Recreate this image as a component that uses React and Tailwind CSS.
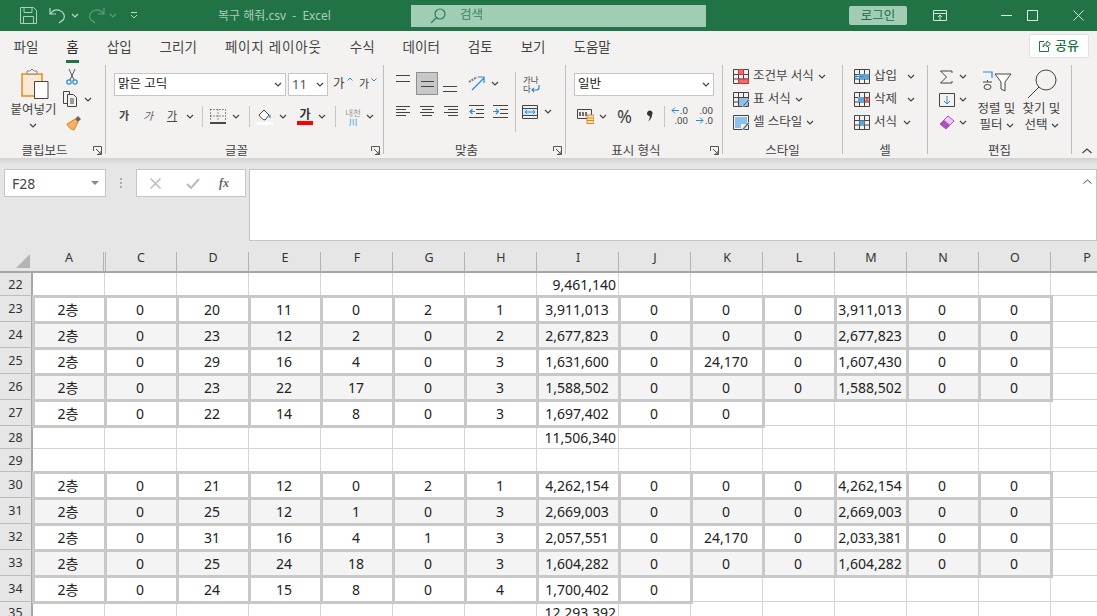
import React from "react";
import clsx from "clsx";

const BLUE = "#2a8ad4";
const DARK = "#444444";

const Chev = ({ className = "", color = "#444" }) => (
  <svg width="8" height="5" viewBox="0 0 8 5" className={className}>
    <path d="M1 1l3 3 3-3" fill="none" stroke={color} strokeWidth="1.2" />
  </svg>
);

const Sep = ({ className = "" }) => <div className={clsx("w-px h-[21px] bg-[#c6c6c6]", className)} />;

const Launcher = () => (
  <svg width="9" height="9" viewBox="0 0 9 9" className="absolute right-[3px] bottom-[-1px]">
    <path d="M.5 5V.5H8.500V8.500H4M3 3l5 5M5 8h3V5" fill="none" stroke="#555" strokeWidth="1" />
  </svg>
);

const Group = ({ className, label, launcher, children }) => (
  <div className={clsx("relative shrink-0 h-[89px] border-r border-[#bdbdbd]", className)}>
    <div className="h-[79px]">{children}</div>
    <div className={clsx("h-[10px] leading-[14px] text-center text-[12.500px] text-[#444]", launcher && "pr-[16px]")}>{label}</div>
    {launcher && <Launcher />}
  </div>
);

const Lines = ({ rows, className = "" }) => (
  <svg width="15" height="15" viewBox="0 0 15 15" className={className}>
    {rows.map(([x1, x2, y]) => (
      <path key={y + "-" + x1} d={`M${x1} ${y}.5H${x2}`} stroke={DARK} strokeWidth="1" />
    ))}
  </svg>
);

const IndentIcon = ({ flip }) => (
  <svg width="15" height="15" viewBox="0 0 15 15">
    <path d="M0 1.500H15M7 5.500H15M7 9.500H15M0 13.500H15" stroke={DARK} />
    {flip ? (
      <path d="M0 7.500H5M3 5l2.500 2.500L3 10" fill="none" stroke={BLUE} strokeWidth="1.2" />
    ) : (
      <path d="M6 7.500H1M3.500 5L1 7.500L3.500 10" fill="none" stroke={BLUE} strokeWidth="1.2" />
    )}
  </svg>
);

const GridIcon = ({ children }) => (
  <svg width="17" height="16" viewBox="0 0 17 16" className="shrink-0">
    <path d="M.5.500h15v14H.500zM.5 5.500h15M.5 10h15M5.500.500v14M10.500.500v14" fill="none" stroke={DARK} />
    {children}
  </svg>
);

const Brush = () => (
  <path d="M9 14l6-7 1.500 1.500-6 6.500z" fill="#5a6b8c" stroke="#fff" strokeWidth=".5" />
);

const TitleBar = () => (
  <div className="h-[31px] bg-[#217346] flex items-center relative shrink-0">
    <svg width="17" height="17" viewBox="0 0 17 17" className="ml-[20px]">
      <path d="M.5.500h13l3 3v13H.500zM4 .5v5h8v-5M3.500 16.500V9.500h10v7" fill="none" stroke="#a8d0ba" />
    </svg>
    <svg width="18" height="17" viewBox="0 0 18 17" className="ml-[12px]">
      <path d="M1 1v6h6M1.500 7C4 3 8 2.500 11 3.500c4 1.500 5.500 6 3.500 9L10 16" fill="none" stroke="#b9dac8" strokeWidth="1.2" />
    </svg>
    <Chev className="ml-[4px]" color="#b9dac8" />
    <svg width="18" height="17" viewBox="0 0 18 17" className="ml-[8px]">
      <path d="M17 1v6h-6M16.500 7C14 3 10 2.500 7 3.500c-4 1.500-5.500 6-3.500 9L8 16" fill="none" stroke="#5f9d7d" strokeWidth="1.2" />
    </svg>
    <Chev className="ml-[4px]" color="#5f9d7d" />
    <svg width="8" height="7" viewBox="0 0 8 7" className="ml-[13px]">
      <path d="M1 .5h6M1 3l3 3 3-3" fill="none" stroke="#b9dac8" />
    </svg>
    <div className="ml-[80px] w-[125px] text-[12px] text-[#a6cfb9] whitespace-nowrap">복구 해줘.csv&nbsp;&nbsp;-&nbsp;&nbsp;Excel</div>
    <div className="ml-[68px] w-[295px] h-[22px] bg-[#a0cdb3] flex items-center">
      <svg width="16" height="16" viewBox="0 0 16 16" className="ml-[19px]">
        <circle cx="10" cy="6" r="5" fill="none" stroke="#2f7d55" strokeWidth="1.2" />
        <path d="M6.500 9.500L1 15" stroke="#2f7d55" strokeWidth="1.2" />
      </svg>
      <span className="ml-[14px] text-[12.500px] text-[#3a8560]">검색</span>
    </div>
    <div className="ml-[143px] w-[58px] h-[19px] rounded-[2px] bg-[#a0cdb3] text-[12.500px] leading-[19px] text-center text-[#1f6b45]">로그인</div>
    <svg width="14" height="12" viewBox="0 0 14 12" className="ml-[26px]">
      <path d="M.5.500h13v10H.500zM.5 3.500h13M7 10V5M5 7l2-2 2 2" fill="none" stroke="#cfe5d9" />
    </svg>
    <div className="ml-[54px] w-[11px] h-px bg-[#d7e9df]" />
    <div className="ml-[15px] w-[11px] h-[11px] border border-[#d7e9df]" />
    <svg width="11" height="11" viewBox="0 0 11 11" className="ml-[35px]">
      <path d="M.5.500l10 10M10.500.500l-10 10" stroke="#d7e9df" />
    </svg>
  </div>
);

const tabs = ["파일", "홈", "삽입", "그리기", "페이지 레이아웃", "수식", "데이터", "검토", "보기", "도움말"];

const TabBar = () => (
  <div className="h-[32px] shrink-0 bg-[#f3f2f1] flex items-center pl-[13.500px] gap-[28px] relative text-[13.500px] text-[#444]">
    {tabs.map((t) => (
      <div key={t} className={clsx("relative whitespace-nowrap", t === "페이지 레이아웃" && "tracking-[0.8px]", t === "홈" && "text-[#222]")}>
        {t}
        {t === "홈" && <div className="absolute left-0 right-0 -bottom-[6px] h-[3px] bg-[#217346]" />}
      </div>
    ))}
    <div className="absolute right-[8px] top-[3px] w-[60px] h-[24px] bg-white border border-[#e1e1e1] rounded-[2px] flex items-center justify-center gap-[4px] text-[13px] font-medium text-[#217346]">
      <svg width="12" height="12" viewBox="0 0 12 12">
        <path d="M5 1.500H.5v10h9V7M4 7c0-3 2-4 4-4V1l3.500 3L8 7V5C6 5 5 5.500 4 7z" fill="none" stroke="#217346" />
      </svg>
      공유
    </div>
  </div>
);

const Clipboard = () => (
  <Group className="w-[106px]" label="클립보드" launcher>
    <div className="flex">
      <div className="w-[66px] flex flex-col items-center pt-[3px]">
        <svg width="28" height="31" viewBox="0 0 28 31" className="ml-[4px]">
          <path d="M1 6h20v22H1z" fill="#fbe9d6" stroke="#e88a1e" strokeWidth="1.5" />
          <path d="M6 6V3h3l2-2 2 2h3v3z" fill="#f3f2f1" stroke="#888" />
          <path d="M13.500 13.500h13.500v17H13.500z" fill="#fff" stroke="#444" />
        </svg>
        <div className="mt-[2px] ml-[1px] text-[12.500px] leading-[18px] text-[#444] whitespace-nowrap">붙여넣기</div>
        <Chev className="mt-[4px]" />
      </div>
      <div className="flex flex-col items-start pt-[2px]">
        <svg width="12" height="16" viewBox="0 0 12 16" className="mt-[2px]">
          <path d="M3 0l5 11M9 0L4 11" stroke="#555" />
          <circle cx="3" cy="13" r="2.200" fill="none" stroke={BLUE} strokeWidth="1.200" />
          <circle cx="9" cy="13" r="2.200" fill="none" stroke={BLUE} strokeWidth="1.200" />
        </svg>
        <div className="flex items-center mt-[6px] -ml-[3px]">
          <svg width="17" height="16" viewBox="0 0 17 16">
            <path d="M4 12.500H.5v-12h6v3M4.500 3.500h6l3 3v9h-9zM7 8h4M7 10h4M7 12h4" fill="none" stroke="#444" />
          </svg>
          <Chev className="ml-[4px]" />
        </div>
        <svg width="16" height="16" viewBox="0 0 16 16" className="mt-[8px]">
          <path d="M9 4l3-3 3 3-3 3z" fill="#666" />
          <path d="M9 4l3 3-4 8c-2 0-6-3-7-6z" fill="#f4b06a" stroke="#e08010" />
        </svg>
      </div>
    </div>
  </Group>
);

const Font = () => (
  <Group className="w-[278px]" label="글꼴" launcher>
    <div className="flex items-center pt-[8px] pl-[8px]">
      <div className="w-[172px] h-[23px] bg-white border border-[#c6c6c6] flex items-center justify-between pl-[3px] pr-[3px] text-[12.500px] text-[#222]">
        맑은 고딕 <Chev />
      </div>
      <div className="ml-[2px] w-[40px] h-[23px] bg-white border border-[#c6c6c6] flex items-center justify-between pl-[3px] pr-[3px] text-[13px] text-[#555]">
        11 <Chev />
      </div>
      <div className="ml-[5px] w-[20px] relative text-[12.500px] text-[#444]">
        가
        <svg width="6" height="4" viewBox="0 0 6 4" className="absolute right-[0px] top-[2px]">
          <path d="M.5 3.500L3 1l2.500 2.500" fill="none" stroke={BLUE} />
        </svg>
      </div>
      <div className="ml-[6px] w-[20px] relative text-[11px] text-[#444]">
        가
        <svg width="6" height="4" viewBox="0 0 6 4" className="absolute right-[2px] top-[2px]">
          <path d="M.5.500L3 3l2.500-2.500" fill="none" stroke={BLUE} />
        </svg>
      </div>
    </div>
    <div className="flex items-center h-[21px] mt-[10px] pl-[13px] text-[11px] text-[#444]">
      <span className="font-bold w-[12px]">가</span>
      <span className="italic ml-[12px] w-[12px] text-[#666]">가</span>
      <span className="underline ml-[12px] w-[12px]">가</span>
      <Chev className="ml-[7px]" />
      <Sep className="ml-[8px]" />
      <svg width="16" height="15" viewBox="0 0 16 15" className="ml-[7px]">
        <path d="M.5.500h15M.5 7h15M.5.500v12M8 .500v12M15.500.500v12" fill="none" stroke="#333" strokeDasharray="1 2" />
        <path d="M0 14h16" stroke="#111" strokeWidth="1.500" />
      </svg>
      <Chev className="ml-[6px]" />
      <Sep className="ml-[9px]" />
      <svg width="16" height="16" viewBox="0 0 16 16" className="ml-[7px]">
        <path d="M2 6l5-5 5 5-4 5c-2 0-5-3-6-5z" fill="#fff" stroke="#444" />
        <path d="M13 5c1 2 1 4 0 4s-1-2 0-4z" fill={BLUE} />
        <path d="M0 13h16v3H0z" fill="#fff" />
      </svg>
      <Chev className="ml-[6px]" />
      <div className="ml-[10px] w-[16px] flex flex-col items-center">
        <span className="font-bold text-[12px] leading-[13px] text-[#333]">가</span>
        <span className="w-[16px] h-[4px] bg-[#ff0000]" />
      </div>
      <Chev className="ml-[5px]" />
      <Sep className="ml-[9px]" />
      <div className="ml-[7px] w-[20px] flex flex-col items-center text-[8.500px] leading-[9px] text-[#999]">
        내천
        <span className="text-[#2a8ad4]">川</span>
      </div>
      <Chev className="ml-[3px]" />
    </div>
  </Group>
);

const Align = () => (
  <Group className="w-[182px]" label="맞춤" launcher>
    <div className="flex items-start pt-[7px] pl-[12px]">
      <Lines rows={[[0, 14, 2], [0, 14, 8]]} className="mt-[1px]" />
      <div className="ml-[5px] w-[22px] h-[23px] bg-[#c8c8c8] border border-[#8e8e8e] flex items-center justify-center">
        <Lines rows={[[1, 14, 5], [1, 14, 10]]} />
      </div>
      <Lines rows={[[0, 14, 8], [0, 14, 13]]} className="ml-[5px] mt-[6px]" />
      <svg width="18" height="18" viewBox="0 0 18 18" className="ml-[10px] mt-[2px]">
        <path d="M4 16L16 4M10 3h6v6" fill="none" stroke={BLUE} strokeWidth="1.200" />
        <path d="M1 8l8-5" stroke="#777" strokeWidth="2" strokeDasharray="2 1" />
      </svg>
      <Chev className="ml-[5px] mt-[9px]" />
      <Sep className="ml-[16px] h-[60px]" />
      <div className="ml-[7px] w-[20px] mt-[3px] text-[8.500px] leading-[9px] text-[#444]">
        가나
        <div className="flex items-center">
          다
          <svg width="9" height="8" viewBox="0 0 9 8">
            <path d="M8 0v3c0 2-2 2-3 2H1M3 3L1 5l2 2" fill="none" stroke={BLUE} strokeWidth="1.200" />
          </svg>
        </div>
      </div>
    </div>
    <div className="flex items-center -mt-[28px] pl-[12px]">
      <Lines rows={[[0, 14, 2], [0, 10, 5], [0, 14, 8], [0, 10, 11]]} />
      <Lines rows={[[0, 14, 2], [2, 12, 5], [0, 14, 8], [2, 12, 11]]} className="ml-[9px]" />
      <Lines rows={[[0, 14, 2], [4, 14, 5], [0, 14, 8], [4, 14, 11]]} className="ml-[9px]" />
      <div className="ml-[10px]"><IndentIcon /></div>
      <div className="ml-[9px]"><IndentIcon flip /></div>
      <svg width="16" height="14" viewBox="0 0 16 14" className="ml-[14px]">
        <path d="M.5.500h15v13H.500zM.5 3.500h15M.5 10.500h15" fill="none" stroke="#444" />
        <path d="M1 4h14v6H1z" fill="#d7e9f7" />
        <path d="M3 7h10M5 5L3 7l2 2M11 5l2 2-2 2" fill="none" stroke={BLUE} />
      </svg>
      <Chev className="ml-[6px]" />
    </div>
  </Group>
);

const NumberFmt = () => (
  <Group className="w-[157px]" label="표시 형식" launcher>
    <div className="pt-[8px] pl-[8px]">
      <div className="w-[140px] h-[23px] bg-white border border-[#c6c6c6] flex items-center justify-between pl-[3px] pr-[3px] text-[12.500px] text-[#222]">
        일반 <Chev />
      </div>
    </div>
    <div className="flex items-center h-[24px] mt-[8px] pl-[11px]">
      <svg width="17" height="16" viewBox="0 0 17 16">
        <path d="M.5 1.500h14v9H.500z" fill="none" stroke="#444" />
        <path d="M3 4v4M6 4v4M9 4v4" stroke="#444" strokeWidth="1.500" />
        <path d="M10 7h7v8.500h-7z" fill="#fbe3c8" stroke="#e48312" />
        <path d="M10 10h7M10 12.500h7" stroke="#e48312" />
      </svg>
      <Chev className="ml-[5px]" />
      <span className="ml-[10px] w-[17px] text-[18px] leading-[20px] text-[#444] font-['Noto_Sans']">%</span>
      <svg width="7" height="12" viewBox="0 0 7 12" className="ml-[12px] -mt-[1px]">
        <path d="M1 3a2.800 2.800 0 1 1 5 2c0 2-1.500 5-4 6.500C4 9 4 7 3.500 6 2 6 1 5 1 3z" fill="#333" />
      </svg>
      <Sep className="ml-[11px]" />
      <div className="ml-[6px] w-[17px] relative text-[9.500px] leading-[10px] text-[#444] text-right font-['Noto_Sans']">
        <svg width="8" height="7" viewBox="0 0 8 7" className="absolute left-0 top-[1px]"><path d="M8 3.500H1M4 .500l-3 3 3 3" fill="none" stroke={BLUE} /></svg>
        .0
        <br />
        .00
      </div>
      <div className="ml-[8px] w-[17px] relative text-[9.500px] leading-[10px] text-[#444] text-right font-['Noto_Sans']">
        .00
        <br />
        .0
        <svg width="8" height="7" viewBox="0 0 8 7" className="absolute left-0 top-[11px]"><path d="M0 3.500H7M4 .500l3 3-3 3" fill="none" stroke={BLUE} /></svg>
      </div>
    </div>
  </Group>
);

const SideRow = ({ icon, text, className = "", chevGap = "ml-[4px]" }) => (
  <div className={clsx("flex items-center h-[23px] text-[12.500px] text-[#444] whitespace-nowrap", className)}>
    {icon}
    <span className="ml-[3px]">{text}</span>
    <Chev className={chevGap} />
  </div>
);

const Styles = () => (
  <Group className="w-[120px]" label="스타일">
    <div className="pl-[10px] flex flex-col">
      <SideRow
        icon={
          <GridIcon>
            <path d="M5.500.500h5v5h-5zM5.500 10h10v4.500h-10z" fill="#f06a6a" stroke="#c33" />
          </GridIcon>
        }
        text="조건부 서식"
      />
      <SideRow
        icon={
          <GridIcon>
            <path d="M6 6h9v8H6z" fill="#8cc0ea" />
            <Brush />
          </GridIcon>
        }
        text="표 서식"
      />
      <SideRow
        icon={
          <svg width="17" height="16" viewBox="0 0 17 16" className="shrink-0">
            <path d="M.5.500h15v14H.500z" fill="none" stroke={DARK} />
            <path d="M2 2h12v7H8v4H2z" fill="#8cc0ea" />
            <Brush />
          </svg>
        }
        text="셀 스타일"
      />
    </div>
  </Group>
);

const Cells = () => (
  <Group className="w-[85px]" label="셀">
    <div className="pl-[11px] flex flex-col">
      <SideRow
        chevGap="ml-[10px]"
        icon={
          <GridIcon>
            <path d="M5 5h10v5H5z" fill="#5aa5e0" />
            <path d="M9 7.500H1M3.500 5L1 7.500 3.500 10" fill="none" stroke={BLUE} />
          </GridIcon>
        }
        text="삽입"
      />
      <SideRow
        chevGap="ml-[10px]"
        icon={
          <GridIcon>
            <path d="M4 5h6v5H4z" fill="#5aa5e0" />
            <path d="M11 5l4 5M15 5l-4 5" stroke="#e04a4a" strokeWidth="1.300" />
          </GridIcon>
        }
        text="삭제"
      />
      <SideRow
        chevGap="ml-[6px]"
        icon={
          <GridIcon>
            <path d="M5.500 5.500h5v5h-5z" fill="#5aa5e0" />
            <path d="M3 0h10" stroke={BLUE} />
          </GridIcon>
        }
        text="서식"
      />
    </div>
  </Group>
);

const Editing = () => (
  <Group className="w-[144px]" label="편집">
    <div className="flex pl-[11px]">
      <div className="w-[37px] flex flex-col">
        <div className="flex items-center h-[23px]">
          <svg width="14" height="14" viewBox="0 0 14 14">
            <path d="M13 3V1H1.500L7.500 7l-6 6H13v-2" fill="none" stroke="#444" />
          </svg>
          <Chev className="ml-[6px]" />
        </div>
        <div className="flex items-center h-[23px]">
          <svg width="16" height="14" viewBox="0 0 16 14">
            <path d="M.5.500h15v13H.500z" fill="none" stroke="#444" />
            <path d="M8 3v8M5 8l3 3 3-3" fill="none" stroke={BLUE} />
          </svg>
          <Chev className="ml-[4px]" />
        </div>
        <div className="flex items-center h-[23px]">
          <svg width="16" height="15" viewBox="0 0 16 15">
            <path d="M1 9l8-8 6 5-8 8z" fill="#e6d0ee" stroke="#b04fc0" />
            <path d="M1 9l4-4 6 5-4 4z" fill="#b04fc0" />
          </svg>
          <Chev className="ml-[4px]" />
        </div>
      </div>
      <div className="w-[45px] -ml-[2px] flex flex-col items-center pt-[6px] text-[12.500px] leading-[16px] text-[#444] whitespace-nowrap">
        <svg width="30" height="22" viewBox="0 0 30 22" className="mb-[8px]">
          <path d="M1 1h9v6" fill="none" stroke={BLUE} strokeWidth="1.200" />
          <path d="M1 11h9M5.500 9v2M2 16a3.500 2.500 0 1 0 7 0a3.500 2.500 0 1 0-7 0" fill="none" stroke="#444" />
          <path d="M13 3h16l-6 8v9l-4-2v-7z" fill="#fff" stroke="#444" />
        </svg>
        <span>정렬 및</span>
        <span className="flex items-center">필터<Chev className="ml-[3px]" /></span>
      </div>
      <div className="w-[45px] flex flex-col items-center pt-[4px] text-[12.500px] leading-[16px] text-[#444] whitespace-nowrap">
        <svg width="30" height="30" viewBox="0 0 30 30" className="mb-[2px]">
          <circle cx="19" cy="11" r="10" fill="none" stroke="#444" />
          <path d="M12 18L1 29" stroke="#444" />
        </svg>
        <span>찾기 및</span>
        <span className="flex items-center">선택<Chev className="ml-[3px]" /></span>
      </div>
    </div>
  </Group>
);

const Ribbon = () => (
  <div className="h-[95px] bg-[#f3f2f1] relative shrink-0">
    <div className="flex pt-[2px]">
      <Clipboard />
      <Font />
      <Align />
      <NumberFmt />
      <Styles />
      <Cells />
      <Editing />
    </div>
    <svg width="10" height="6" viewBox="0 0 10 6" className="absolute left-[1082px] top-[85px]">
      <path d="M.5 5L5 1l4.500 4" fill="none" stroke="#444" strokeWidth="1.200" />
    </svg>
  </div>
);

const FormulaBar = () => (
  <div className="h-[90px] bg-[#e6e6e6] relative shrink-0">
    <div className="h-[7px] bg-gradient-to-b from-[#d2d2d2] to-[#e6e6e6]" />
    <div className="flex items-start pl-[4px] pt-[4px]">
      <div className="w-[102px] h-[28px] bg-white border border-[#c6c6c6] flex items-center justify-between pl-[7px] pr-[4px] text-[14px] text-[#444] font-['Noto_Sans']">
        F28
        <div className="w-0 h-0 border-l-[4px] border-r-[4px] border-t-[4px] border-l-transparent border-r-transparent border-t-[#888] mr-[2px]" />
      </div>
      <div className="w-[30px] h-[28px] flex flex-col items-center justify-center gap-[2px]">
        <span className="w-[2px] h-[2px] bg-[#aaa]" />
        <span className="w-[2px] h-[2px] bg-[#aaa]" />
        <span className="w-[2px] h-[2px] bg-[#aaa]" />
      </div>
      <div className="w-[110px] h-[28px] bg-white border border-[#c6c6c6] flex items-center pl-[13px]">
        <svg width="11" height="11" viewBox="0 0 11 11">
          <path d="M.5.500l10 10M10.500.500l-10 10" stroke="#bbb" strokeWidth="1.500" />
        </svg>
        <svg width="14" height="11" viewBox="0 0 14 11" className="ml-[25px]">
          <path d="M1 6l4 4 8-9" fill="none" stroke="#bbb" strokeWidth="2" />
        </svg>
        <span className="ml-[19px] text-[12px] italic font-bold text-[#666] font-['Liberation_Serif']">fx</span>
      </div>
      <div className="ml-[3px] flex-1 h-[72px] bg-white border border-[#c6c6c6] relative">
        <svg width="9" height="5" viewBox="0 0 9 5" className="absolute right-[4px] top-[9px]">
          <path d="M.5 4.500L4.500 1l4 3.500" fill="none" stroke="#444" />
        </svg>
      </div>
    </div>
  </div>
);

const COLS = ["A", "C", "D", "E", "F", "G", "H", "I", "J", "K", "L", "M", "N", "O", "P"];
const GRID = "grid grid-cols-[33px_72px_72px_72px_72px_72px_72px_72px_82px_72px_72px_72px_72px_72px_72px_72px]";

const Header = () => (
  <div className={clsx(GRID, "h-[25px] shrink-0 bg-[#e6e6e6] border-b-2 border-[#a6a6a6] text-[12.500px] text-[#333] font-['Noto_Sans']")}>
    <div className="relative">
      <div className="absolute right-[3px] bottom-[3px] w-0 h-0 border-b-[14px] border-l-[14px] border-b-[#b4b4b4] border-l-transparent" />
    </div>
    {COLS.map((c) => (
      <div key={c} className="relative flex items-center justify-center pb-[2px]">
        {c}
        {/* column B is hidden, so A gets the double line */}
        <div className={clsx("absolute top-[4px] bottom-0 w-px bg-[#b4b4b4]", c === "A" ? "right-[1px]" : "right-0")} />
        {c === "A" && <div className="absolute -right-px top-[4px] bottom-0 w-px bg-[#b4b4b4]" />}
      </div>
    ))}
  </div>
);

const row = (a, c, d, e, f, g, h, i, k, m) => ({ a, c, d, e, f, g, h, i, k, m });

const ROWS = [
  { n: 22, h: "h-[23px]", total: "9,461,140" },
  { n: 23, h: "h-[26px]", data: row("2층", 0, 20, 11, 0, 2, 1, "3,911,013", 0, "3,911,013") },
  { n: 24, h: "h-[26px]", shade: true, data: row("2층", 0, 23, 12, 2, 0, 2, "2,677,823", 0, "2,677,823") },
  { n: 25, h: "h-[26px]", data: row("2층", 0, 29, 16, 4, 0, 3, "1,631,600", "24,170", "1,607,430") },
  { n: 26, h: "h-[26px]", shade: true, data: row("2층", 0, 23, 22, 17, 0, 3, "1,588,502", 0, "1,588,502") },
  { n: 27, h: "h-[26px]", data: row("2층", 0, 22, 14, 8, 0, 3, "1,697,402", 0), upto: 10 },
  { n: 28, h: "h-[23px]", total: "11,506,340" },
  { n: 29, h: "h-[23px]" },
  { n: 30, h: "h-[26px]", data: row("2층", 0, 21, 12, 0, 2, 1, "4,262,154", 0, "4,262,154") },
  { n: 31, h: "h-[26px]", shade: true, data: row("2층", 0, 25, 12, 1, 0, 3, "2,669,003", 0, "2,669,003") },
  { n: 32, h: "h-[26px]", data: row("2층", 0, 31, 16, 4, 1, 3, "2,057,551", "24,170", "2,033,381") },
  { n: 33, h: "h-[26px]", shade: true, data: row("2층", 0, 25, 24, 18, 0, 3, "1,604,282", 0, "1,604,282") },
  { n: 34, h: "h-[26px]", data: row("2층", 0, 24, 15, 8, 0, 4, "1,700,402"), upto: 9 },
  { n: 35, h: "h-[18px]", total: "12,293,392" },
];

const Thin = ({ children }) => (
  <div className="border-r border-b border-[#d4d4d4] flex items-center justify-end pr-[2px]">{children}</div>
);

const Thick = ({ v, shade }) => (
  <div
    className={clsx(
      "relative flex items-center justify-center pr-[2px] pt-[1px]",
      "after:absolute after:-left-px after:-top-px after:-right-[2px] after:-bottom-[2px] after:border-[3px] after:border-[#c8c8c8]",
      shade && "bg-[#f4f4f4]"
    )}
  >
    {v}
  </div>
);

const Row = ({ n, h, shade, data, total, upto = 14 }) => {
  // columns A..O, J and L and N and O are always zero in this sheet
  const vals = data
    ? [data.a, data.c, data.d, data.e, data.f, data.g, data.h, data.i, 0, data.k, 0, data.m, 0, 0]
    : [];
  return (
    <div className={clsx(GRID, h)}>
      <div className="bg-[#e6e6e6] border-r-2 border-b border-r-[#a6a6a6] border-b-[#bdbdbd] flex items-center justify-center pt-[2px] text-[12.500px] text-[#333]">
        {n}
      </div>
      {COLS.map((c, i) => {
        if (data && i < upto) return <Thick key={c} v={vals[i]} shade={shade} />;
        return <Thin key={c}>{c === "I" ? total : null}</Thin>;
      })}
    </div>
  );
};

export default function App() {
  return (
    <div className="w-[1097px] h-[616px] overflow-hidden bg-white flex flex-col font-['Noto_Sans','Noto_Sans_CJK_KR',sans-serif]">
      <TitleBar />
      <TabBar />
      <Ribbon />
      <FormulaBar />
      <Header />
      <div className="shrink-0 text-[14px] text-[#222]">
        {ROWS.map((r) => (
          <Row key={r.n} {...r} />
        ))}
      </div>
    </div>
  );
}
